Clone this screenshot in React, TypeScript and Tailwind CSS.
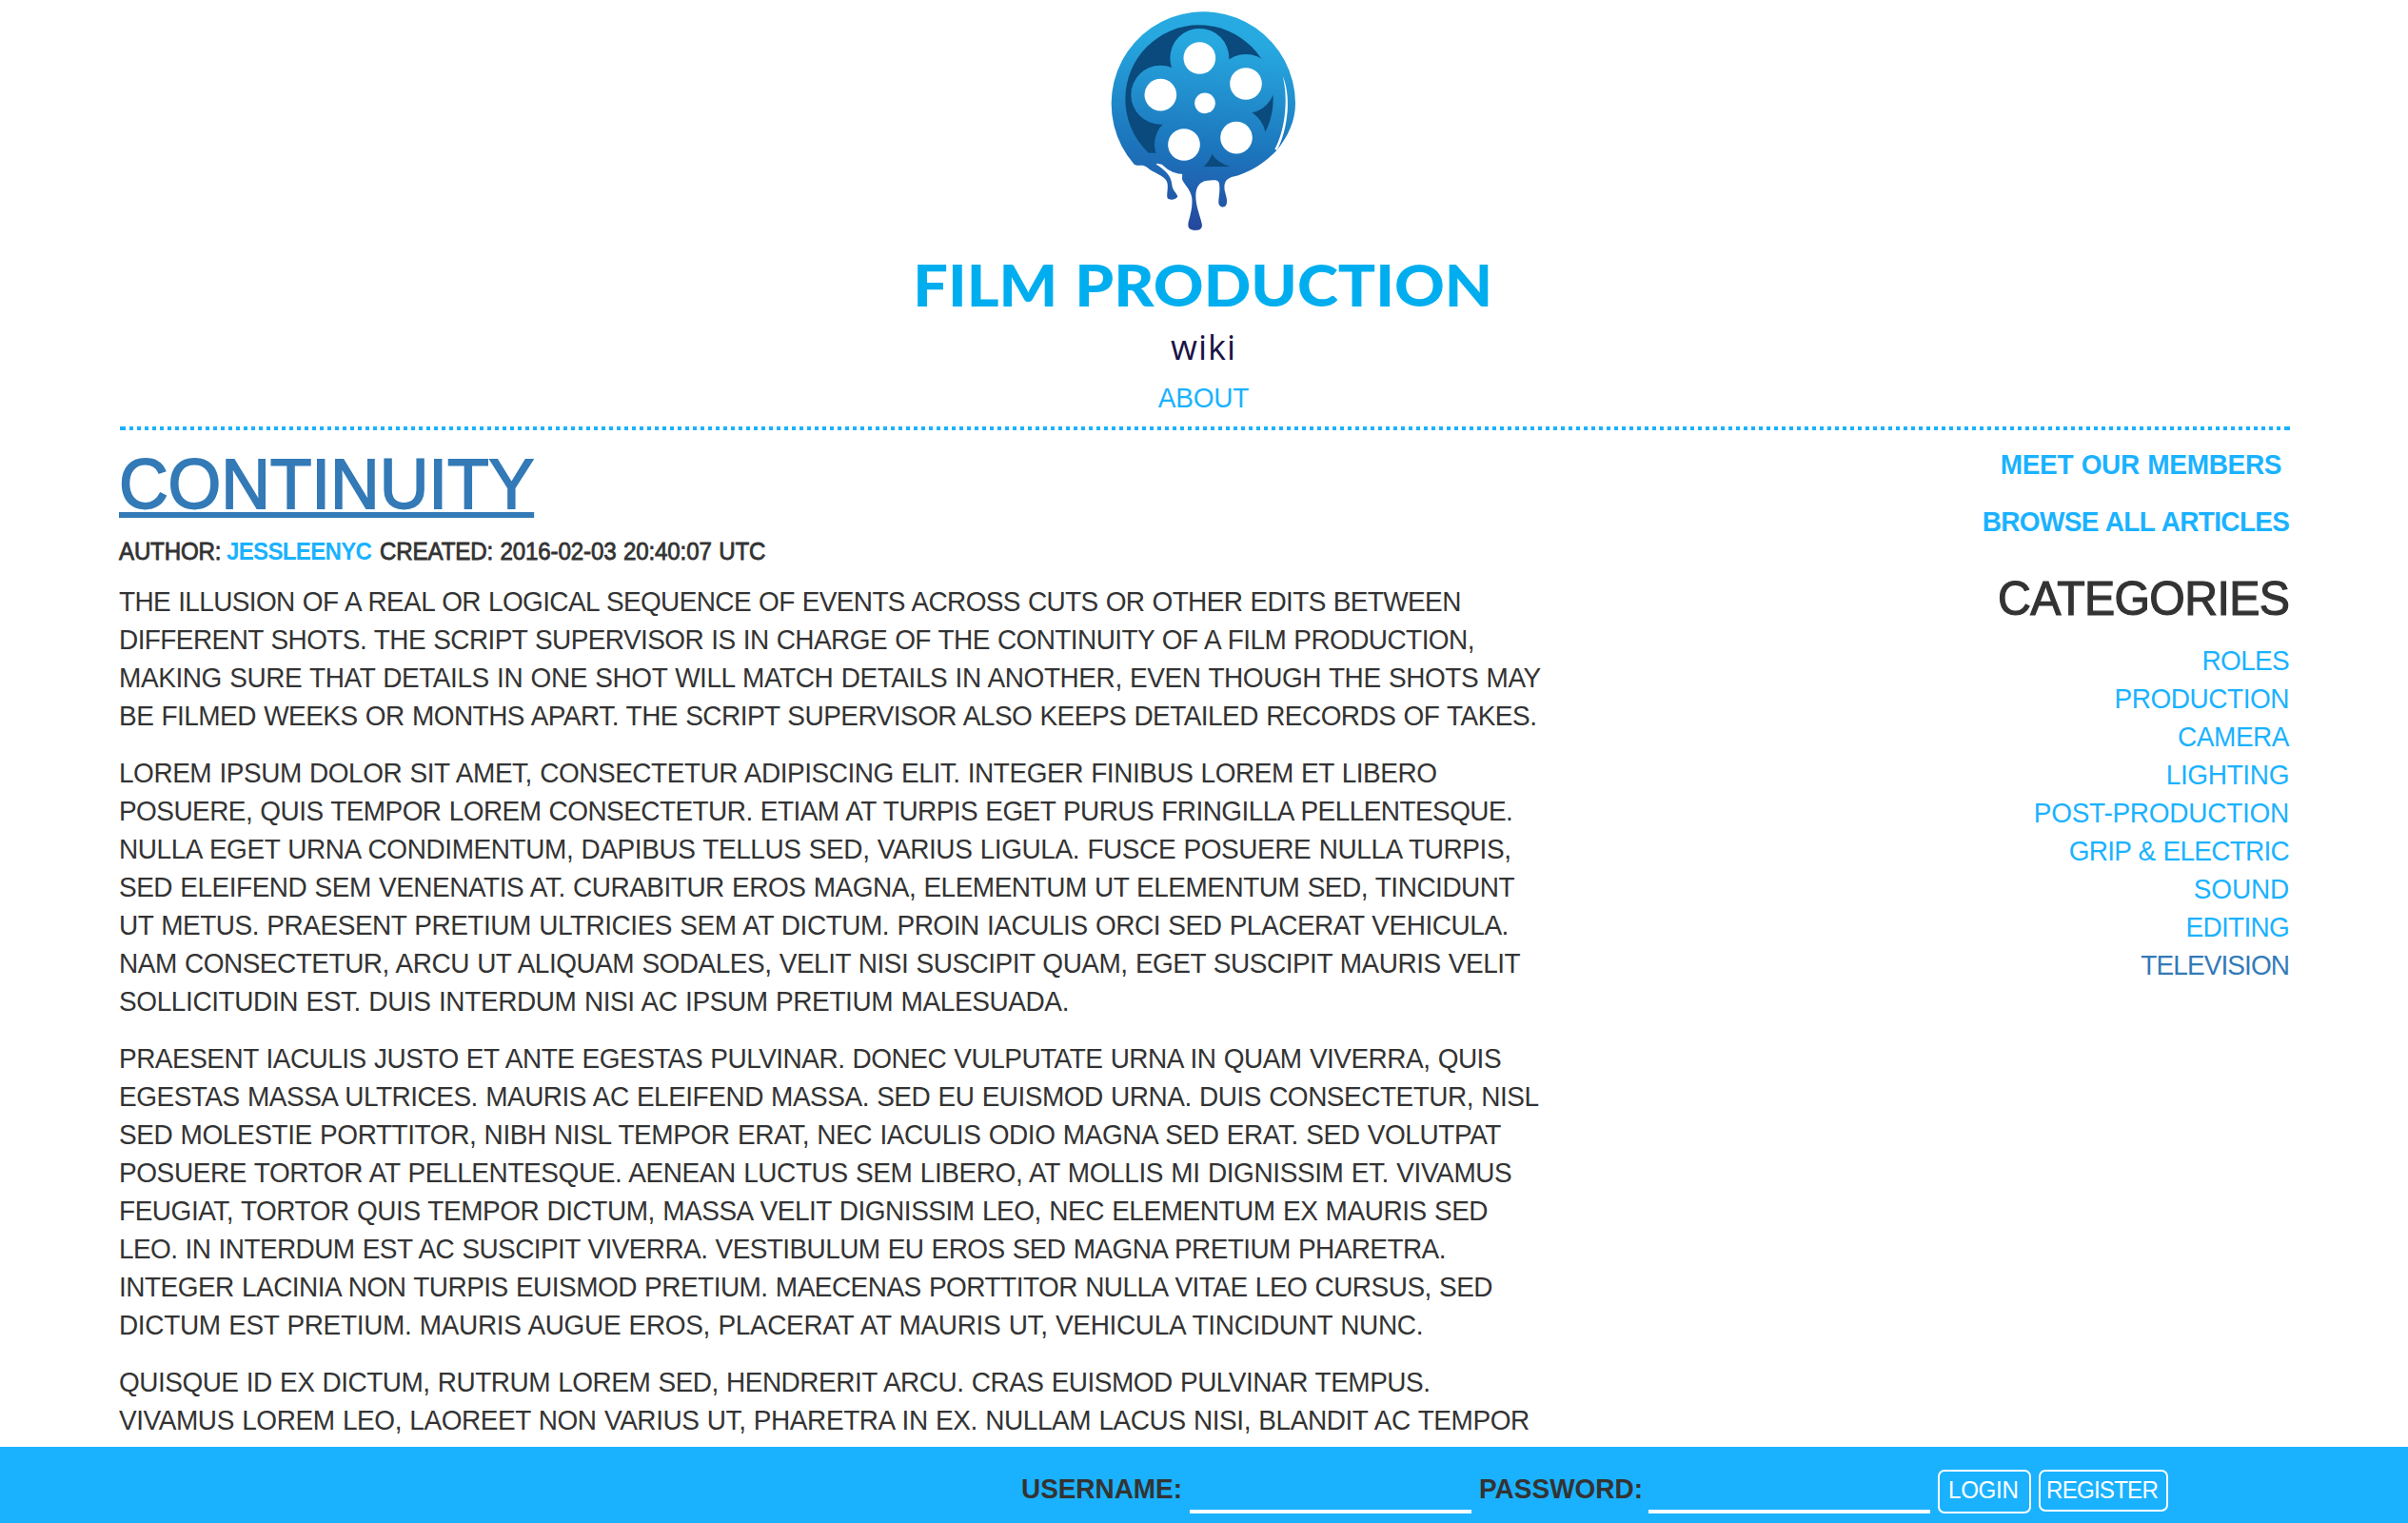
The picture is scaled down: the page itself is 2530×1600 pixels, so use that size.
import React from 'react'

type Line = { text: string; track: string }

const paragraphs: Line[][] = [
  [
    { text: 'THE ILLUSION OF A REAL OR LOGICAL SEQUENCE OF EVENTS ACROSS CUTS OR OTHER EDITS BETWEEN', track: 'tracking-[-0.656px]' },
    { text: 'DIFFERENT SHOTS. THE SCRIPT SUPERVISOR IS IN CHARGE OF THE CONTINUITY OF A FILM PRODUCTION,', track: 'tracking-[-0.602px]' },
    { text: 'MAKING SURE THAT DETAILS IN ONE SHOT WILL MATCH DETAILS IN ANOTHER, EVEN THOUGH THE SHOTS MAY', track: 'tracking-[-0.437px]' },
    { text: 'BE FILMED WEEKS OR MONTHS APART. THE SCRIPT SUPERVISOR ALSO KEEPS DETAILED RECORDS OF TAKES.', track: 'tracking-[-0.548px]' },
  ],
  [
    { text: 'LOREM IPSUM DOLOR SIT AMET, CONSECTETUR ADIPISCING ELIT. INTEGER FINIBUS LOREM ET LIBERO', track: 'tracking-[-0.484px]' },
    { text: 'POSUERE, QUIS TEMPOR LOREM CONSECTETUR. ETIAM AT TURPIS EGET PURUS FRINGILLA PELLENTESQUE.', track: 'tracking-[-0.582px]' },
    { text: 'NULLA EGET URNA CONDIMENTUM, DAPIBUS TELLUS SED, VARIUS LIGULA. FUSCE POSUERE NULLA TURPIS,', track: 'tracking-[-0.437px]' },
    { text: 'SED ELEIFEND SEM VENENATIS AT. CURABITUR EROS MAGNA, ELEMENTUM UT ELEMENTUM SED, TINCIDUNT', track: 'tracking-[-0.505px]' },
    { text: 'UT METUS. PRAESENT PRETIUM ULTRICIES SEM AT DICTUM. PROIN IACULIS ORCI SED PLACERAT VEHICULA.', track: 'tracking-[-0.483px]' },
    { text: 'NAM CONSECTETUR, ARCU UT ALIQUAM SODALES, VELIT NISI SUSCIPIT QUAM, EGET SUSCIPIT MAURIS VELIT', track: 'tracking-[-0.509px]' },
    { text: 'SOLLICITUDIN EST. DUIS INTERDUM NISI AC IPSUM PRETIUM MALESUADA.', track: 'tracking-[-0.406px]' },
  ],
  [
    { text: 'PRAESENT IACULIS JUSTO ET ANTE EGESTAS PULVINAR. DONEC VULPUTATE URNA IN QUAM VIVERRA, QUIS', track: 'tracking-[-0.531px]' },
    { text: 'EGESTAS MASSA ULTRICES. MAURIS AC ELEIFEND MASSA. SED EU EUISMOD URNA. DUIS CONSECTETUR, NISL', track: 'tracking-[-0.506px]' },
    { text: 'SED MOLESTIE PORTTITOR, NIBH NISL TEMPOR ERAT, NEC IACULIS ODIO MAGNA SED ERAT. SED VOLUTPAT', track: 'tracking-[-0.437px]' },
    { text: 'POSUERE TORTOR AT PELLENTESQUE. AENEAN LUCTUS SEM LIBERO, AT MOLLIS MI DIGNISSIM ET. VIVAMUS', track: 'tracking-[-0.422px]' },
    { text: 'FEUGIAT, TORTOR QUIS TEMPOR DICTUM, MASSA VELIT DIGNISSIM LEO, NEC ELEMENTUM EX MAURIS SED', track: 'tracking-[-0.482px]' },
    { text: 'LEO. IN INTERDUM EST AC SUSCIPIT VIVERRA. VESTIBULUM EU EROS SED MAGNA PRETIUM PHARETRA.', track: 'tracking-[-0.605px]' },
    { text: 'INTEGER LACINIA NON TURPIS EUISMOD PRETIUM. MAECENAS PORTTITOR NULLA VITAE LEO CURSUS, SED', track: 'tracking-[-0.54px]' },
    { text: 'DICTUM EST PRETIUM. MAURIS AUGUE EROS, PLACERAT AT MAURIS UT, VEHICULA TINCIDUNT NUNC.', track: 'tracking-[-0.356px]' },
  ],
  [
    { text: 'QUISQUE ID EX DICTUM, RUTRUM LOREM SED, HENDRERIT ARCU. CRAS EUISMOD PULVINAR TEMPUS.', track: 'tracking-[-0.523px]' },
    { text: 'VIVAMUS LOREM LEO, LAOREET NON VARIUS UT, PHARETRA IN EX. NULLAM LACUS NISI, BLANDIT AC TEMPOR', track: 'tracking-[-0.442px]' },
  ],
]

const categories = [
  { text: 'ROLES', cls: 'tracking-[-0.68px]' },
  { text: 'PRODUCTION', cls: 'tracking-[-0.463px]' },
  { text: 'CAMERA', cls: 'tracking-[-0.478px]' },
  { text: 'LIGHTING', cls: 'tracking-[-0.362px]' },
  { text: 'POST-PRODUCTION', cls: 'tracking-[-0.259px]' },
  { text: 'GRIP & ELECTRIC', cls: 'tracking-[-0.761px]' },
  { text: 'SOUND', cls: 'tracking-[-0.18px]' },
  { text: 'EDITING', cls: 'tracking-[-0.738px]' },
  { text: 'TELEVISION', cls: 'tracking-[-0.941px] text-[#337ab7]' },
]

const holes = [
  [361, 183],
  [507, 264],
  [477, 434],
  [312, 456],
  [238, 299],
]

function Logo() {
  return (
    <svg className="block h-[398px] w-[640px]" viewBox="945 0 640 398">
      <defs>
        <linearGradient id="reel" gradientUnits="userSpaceOnUse" x1="400" y1="60" x2="340" y2="720">
          <stop offset="0" stopColor="#27aae1" />
          <stop offset="0.1" stopColor="#27a9e0" />
          <stop offset="0.62" stopColor="#1c75bc" />
          <stop offset="0.76" stopColor="#1f66b3" />
          <stop offset="1" stopColor="#25489c" />
        </linearGradient>
        <clipPath id="inner">
          <path d="M100 60H620V526H300V482H100Z" />
        </clipPath>
      </defs>
      <g transform="translate(1140 0) scale(0.33333)">
        <path
          fill="url(#reel)"
          d="M155 518A290 290 0 1 1 663 326C663 380 640 430 605 473C570 510 520 545 462 558C440 566 438 580 440 600C447 625 449 634 446 643C443 656 424 657 421 640C420 625 425 610 424 590C424 573 420 567 405 568L385 569C360 572 350 590 349 615C349 650 360 670 368 704C372 722 360 726 347 726C330 726 322 718 326 700C334 670 339 650 337 625C334 600 320 590 308 570C303 560 310 550 304 542C285 530 255 520 228 515C222 516 225 520 235 525C262 545 272 560 274 582C275 600 287 605 292 619C288 631 265 631 260 625C256 615 262 600 260 580C258 560 235 552 215 541C195 528 190 520 175 521C165 521 160 521 155 518Z"
        />
        <circle cx="360" cy="312" r="233" fill="#0a4a7c" clipPath="url(#inner)" />
        <g fill="url(#reel)">
          <path d="M361 183L507 264L477 434L312 456L238 299Z" />
          {holes.map(([x, y]) => (
            <circle key={x} cx={x} cy={y} r="93" />
          ))}
        </g>
        <g fill="#fff">
          {holes.map(([x, y]) => (
            <circle key={x} cx={x} cy={y} r="50.5" />
          ))}
          <circle cx="378" cy="325" r="32.5" />
          <path d="M623 240C632 275 635 320 629 365C624 405 614 440 598 470L605 474C622 440 634 400 638 350C641 310 636 268 623 240Z" />
        </g>
      </g>
      <g fill="#00aeef" fontFamily="Lato, sans-serif" fontWeight="900" fontSize="60">
        <text x="959.3" y="321.5" textLength="152" lengthAdjust="spacingAndGlyphs">FILM</text>
        <text x="1129.3" y="321.5" textLength="439" lengthAdjust="spacingAndGlyphs">PRODUCTION</text>
      </g>
      <text x="1230" y="377.7" fill="#1b1346" fontFamily="Open Sans, sans-serif" fontSize="36" letterSpacing="1.03">
        wiki
      </text>
    </svg>
  )
}

export default function App() {
  return (
    <div className="relative h-[1600px] w-[2530px] overflow-hidden bg-white font-['Liberation_Sans',Arial,sans-serif] text-[29px] leading-[40px] whitespace-nowrap text-[#333] [word-spacing:1px]">
      <header className="mx-auto flex w-[2280px] flex-col items-center">
        <Logo />
        <a className="scale-x-[0.965] tracking-[-0.178px] text-[#1ab2ff]">ABOUT</a>
      </header>
      <div className="mx-auto mt-[10px] h-1 w-[2280px] translate-x-px border-x-2 border-[#1ab2ff] bg-[repeating-linear-gradient(to_right,#1ab2ff_0_4px,transparent_4px_8px)]" />

      <main className="mx-auto mt-4 flex w-[2280px] justify-between">
        <article className="w-[1520px]">
          <h1 className="w-fit origin-left scale-x-[0.955] text-[75px] leading-[80px] tracking-[-0.158px] text-[#337ab7] underline decoration-[6px] underline-offset-[4px] [-webkit-text-stroke:1.8px_#337ab7] [text-decoration-skip-ink:none]">
            CONTINUITY
          </h1>
          <div className="mt-[11px] flex text-[25px]">
            <span className="w-[113px] origin-left scale-x-[0.965] tracking-[-0.205px] [-webkit-text-stroke:0.8px_#333]">AUTHOR:</span>
            <a className="w-[160.5px] origin-left scale-x-[0.965] font-bold tracking-[-0.749px] text-[#1ab2ff]">JESSLEENYC</a>
            <span className="origin-left scale-x-[0.965] tracking-[-0.153px] [-webkit-text-stroke:0.8px_#333]">
              CREATED: 2016-02-03 20:40:07 UTC
            </span>
          </div>
          <div className="mt-[13px] flex origin-left scale-x-[0.965] flex-col gap-5">
            {paragraphs.map((lines, i) => (
              <p key={i}>
                {lines.map((l) => (
                  <span key={l.text} className={`block ${l.track}`}>
                    {l.text}
                  </span>
                ))}
              </p>
            ))}
          </div>
        </article>

        <aside className="flex flex-col items-end text-[#1ab2ff]">
          <a className="mr-[8px] origin-right scale-x-[0.965] font-bold tracking-[-0.321px]">MEET OUR MEMBERS</a>
          <a className="mt-5 origin-right scale-x-[0.965] font-bold tracking-[-0.683px]">BROWSE ALL ARTICLES</a>
          <h2 className="mt-[31px] origin-right scale-x-[0.965] text-[50px] leading-[60px] tracking-[-0.696px] text-[#333] [-webkit-text-stroke:1.2px_#333]">
            CATEGORIES
          </h2>
          <ul className="mt-[15px] flex origin-right scale-x-[0.965] flex-col items-end">
            {categories.map((c) => (
              <li key={c.text} className={c.cls}>
                {c.text}
              </li>
            ))}
          </ul>
        </aside>
      </main>

      <footer className="fixed bottom-0 left-0 flex h-20 w-[2530px] items-start bg-[#1ab2ff] pt-6 pl-[1073px]">
        <label className="w-[177px] origin-left scale-x-[0.965] font-bold tracking-[-0.058px]">USERNAME:</label>
        <input className="mr-2 h-[46px] w-[296px] border-b-4 border-white bg-transparent outline-none" />
        <label className="w-[178px] origin-left scale-x-[0.965] font-bold">PASSWORD:</label>
        <input type="password" className="mr-2 h-[46px] w-[296px] border-b-4 border-white bg-transparent outline-none" />
        <button className="mr-2 flex h-[46px] w-[98px] rounded-[7px] border-2 border-white pl-[9px] text-[25px] leading-[38px] text-white">
          <span className="origin-left scale-x-[0.965] tracking-[-0.292px]">LOGIN</span>
        </button>
        <button className="flex h-[44px] w-[136px] rounded-[7px] border-2 border-white pl-[6px] text-[25px] leading-[38px] text-white">
          <span className="origin-left scale-x-[0.965] tracking-[-0.811px]">REGISTER</span>
        </button>
      </footer>
    </div>
  )
}
